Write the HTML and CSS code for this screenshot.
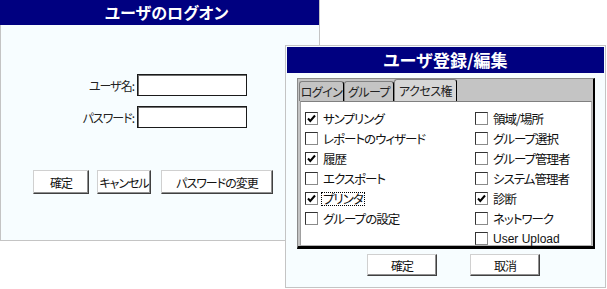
FILE: index.html
```html
<!DOCTYPE html>
<html lang="ja">
<head>
  <meta charset="UTF-8">
  <title>ユーザのログオン</title>
  <link rel="stylesheet" href="styles.css">
</head>
<body>
  <div class="desk">
    <div class="win logon">
      <div class="title">ユーザのログオン</div>
      <div class="logon-body">
        <div class="field">
          <label>ユーザ名:</label>
          <span class="input"></span>
        </div>
        <div class="field">
          <label>パスワード:</label>
          <span class="input"></span>
        </div>
        <div class="btns">
          <button class="btn b-ok">確定</button>
          <button class="btn b-cancel">キャンセル</button>
          <button class="btn b-pass">パスワードの変更</button>
        </div>
      </div>
    </div>

    <div class="win edit">
      <div class="title">ユーザ登録/編集</div>
      <div class="tabctl">
        <div class="tabs">
          <span class="tab t1">ログイン</span>
          <span class="tab t2">グループ</span>
          <span class="tab t3 active">アクセス権</span>
        </div>
        <div class="panel">
          <div class="opt"><span class="cb on"><svg viewBox="0 0 11 11"><path d="M2 5.5 L4.3 8 L9 2.5"/></svg></span>サンプリング</div>
          <div class="opt"><span class="cb"></span>領域/場所</div>
          <div class="opt"><span class="cb"></span>レポートのウィザード</div>
          <div class="opt"><span class="cb"></span>グループ選択</div>
          <div class="opt"><span class="cb on"><svg viewBox="0 0 11 11"><path d="M2 5.5 L4.3 8 L9 2.5"/></svg></span>履歴</div>
          <div class="opt"><span class="cb"></span>グループ管理者</div>
          <div class="opt"><span class="cb"></span>エクスポート</div>
          <div class="opt"><span class="cb"></span>システム管理者</div>
          <div class="opt"><span class="cb on"><svg viewBox="0 0 11 11"><path d="M2 5.5 L4.3 8 L9 2.5"/></svg></span><span class="focus">プリンタ</span></div>
          <div class="opt"><span class="cb on"><svg viewBox="0 0 11 11"><path d="M2 5.5 L4.3 8 L9 2.5"/></svg></span>診断</div>
          <div class="opt"><span class="cb"></span>グループの設定</div>
          <div class="opt"><span class="cb"></span>ネットワーク</div>
          <div class="opt"></div>
          <div class="opt latin"><span class="cb"></span>User Upload</div>
        </div>
      </div>
      <div class="foot">
        <button class="btn wide">確定</button>
        <button class="btn wide">取消</button>
      </div>
    </div>
  </div>
</body>
</html>
```

FILE: styles.css
```css
body {
  margin: 0;
  background: #ffffff;
  font-family: "Noto Sans CJK JP", "Liberation Sans", sans-serif;
  font-size: 12px;
  color: #000;
  font-feature-settings: "palt";
}

.desk {
  position: relative;
  width: 607px;
  height: 289px;
  overflow: hidden;
}

.win {
  position: absolute;
  background: #f7fdff;
  border: 1px solid #c4c4c4;
  box-sizing: border-box;
}

.title {
  background: #000080;
  color: #ffffff;
  font-weight: bold;
  font-size: 16px;
  text-align: center;
  line-height: 25px;
  height: 25px;
}

/* ログオン */
.logon {
  left: 0;
  top: 0;
  width: 320px;
  height: 241px;
  border-top: 0;
}
.logon .title {
  margin-left: -1px;
  padding-left: 14px;
}

.logon-body {
  padding-top: 49px;
}

.field {
  display: flex;
  align-items: center;
  height: 22px;
  margin-bottom: 10px;
}
.field label {
  width: 136px;
  text-align: right;
  padding-right: 3px;
  box-sizing: border-box;
  font-size: 12px;
  letter-spacing: -1px;
  color: #222;
}
.input {
  width: 110px;
  height: 22px;
  box-sizing: border-box;
  background: #ffffff;
  border: 1px solid #1a1a1a;
  box-shadow: inset 1px 1px 0 #707070;
}

.btns {
  display: flex;
  margin: 42px 0 0 32px;
}

.btn {
  font-family: inherit;
  font-feature-settings: "palt";
  font-size: 12px;
  letter-spacing: -1px;
  white-space: nowrap;
  background: #ffffff;
  color: #111;
  border: 1px solid;
  border-color: #d0d0d0 #404040 #404040 #d0d0d0;
  box-shadow: inset -1px -1px 0 #909090;
  padding: 0;
  height: 24px;
}
.b-ok { width: 56px; margin-right: 8px; }
.b-cancel { width: 54px; margin-right: 10px; }
.b-pass { width: 112px; }

/* ユーザ登録/編集 */
.edit {
  left: 285px;
  top: 45px;
  width: 321px;
  height: 243px;
  padding: 1px;
}
.edit .title {
  height: 26px;
  line-height: 26px;
  font-size: 17px;
}

.tabctl {
  margin: 5px 9px 0 10px;
  background: #c4c4c4;
  border: 1px solid #8a8a8a;
  border-right: 2px solid #000;
  border-bottom: 3px solid #000;
  padding: 0 1px 0 2px;
}

.tabs {
  display: flex;
  height: 22px;
}
.tab {
  font-size: 12px;
  letter-spacing: -0.5px;
  line-height: 20px;
  height: 20px;
  margin-top: 2px;
  text-align: center;
  box-sizing: border-box;
  border: 1px solid #808080;
  border-bottom: 0;
  border-right: 1px solid #000;
  border-radius: 3px 3px 0 0;
  color: #222;
}
.t1 { width: 45px; margin-left: -1px; }
.t2 { width: 50px; }
.t3 { width: 63px; }
.tab.active {
  background: #d6d6d6;
  margin-top: 0;
  height: 22px;
  line-height: 22px;
}

.panel {
  background: #ffffff;
  border-top: 1px solid #808080;
  border-left: 1px solid #a0a0a0;
  border-right: 1px solid #b0b0b0;
  border-bottom: 1px solid #b0b0b0;
  display: grid;
  grid-template-columns: 170px 1fr;
  row-gap: 7px;
  padding: 10px 0 0 4px;
  height: 145px;
  box-sizing: border-box;
}

.opt {
  display: flex;
  align-items: center;
  height: 13px;
  font-size: 12.5px;
  letter-spacing: -1px;
  white-space: nowrap;
  color: #111;
}
.opt.latin {
  font-family: "Liberation Sans", sans-serif;
  font-size: 12px;
  letter-spacing: 0;
}

.cb {
  width: 13px;
  height: 13px;
  box-sizing: border-box;
  border: 1px solid;
  border-color: #333 #8a8a8a #8a8a8a #333;
  background: #fff;
  margin-right: 5px;
  flex: none;
}
.cb svg {
  display: block;
  width: 11px;
  height: 11px;
  fill: none;
  stroke: #000;
  stroke-width: 2;
}

.focus {
  border: 1px dotted #000;
  line-height: 12px;
  padding: 0 1px;
  margin-left: -2px;
}

.foot {
  display: flex;
  justify-content: center;
  gap: 33px;
  padding: 5px 0 0 16px;
}
.btn.wide {
  width: 70px;
  height: 22px;
}
```
